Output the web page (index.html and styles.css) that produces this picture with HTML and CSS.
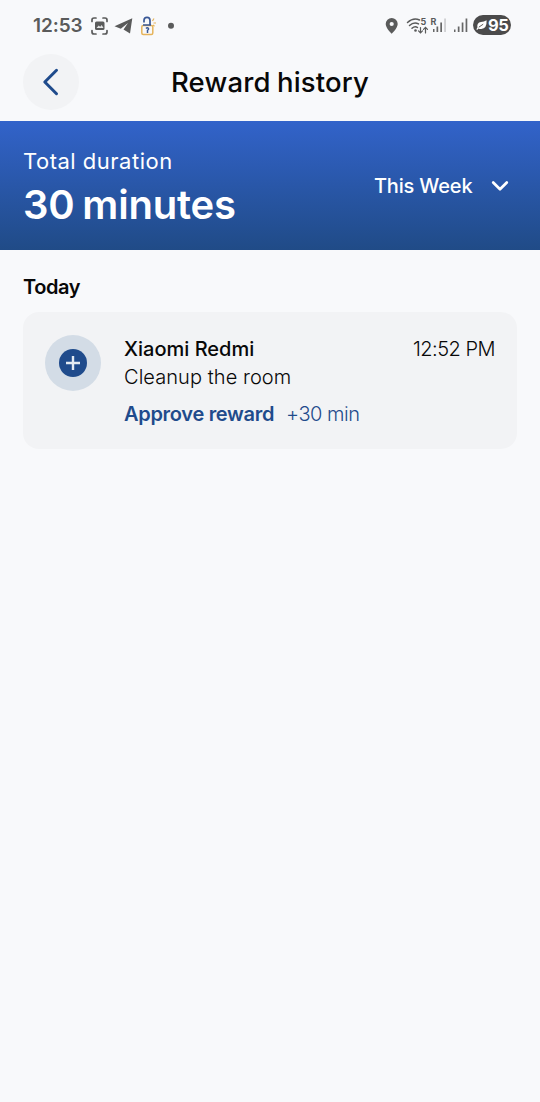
FILE: index.html
```html
<!DOCTYPE html>
<html lang="en">
<head>
<meta charset="utf-8">
<title>Reward history</title>
<link rel="stylesheet" href="styles.css">
</head>
<body>
<div class="status">
  <span class="clock">12:53</span>
  <svg class="left-icons" width="90" height="24" viewBox="90 14 90 24" fill="none">
    <g stroke="#5a5b5b" stroke-width="1.700" stroke-linecap="round" stroke-linejoin="round">
      <path d="M92 21.500v-1.500q0-2 2-2H96M103 18h2q2 0 2 2v1.500M107 30.500v1.500q0 2-2 2H103M96 34h-2q-2 0-2-2v-1.500"/>
    </g>
    <rect x="95" y="21.500" width="9.500" height="8.500" rx="1.500" fill="#5a5b5b"/>
    <path d="M96.500 28l2.200-2.500 1.500 1.300 1.500-1.800 1.800 3z" fill="#e4e5e6"/>
    <path d="M114.500 26.300 132.300 18.300 130 33.600 123.500 29.500 128 23 120.800 28.700z" fill="#5a5b5b"/>
    <rect x="141.800" y="25.500" width="11" height="9" rx="1.500" stroke="#e5b45c" stroke-width="1.500"/>
    <path d="M143 25h8M144 22.500v-2q0-3.200 3-3.200t3 3.200v4" stroke="#395896" stroke-width="1.700"/>
    <path d="M146 28.500q1.300-1.500 2.500 0 .4 1-1 1.800V33" stroke="#395896" stroke-width="1.500"/>
    <path d="M152.500 21l1.500-2.500M153.500 23h2.500M153 25l1.500 1.200" stroke="#e5b45c" stroke-width="1.200"/>
    <circle cx="171" cy="25.800" r="3" fill="#5a5b5b"/>
  </svg>
  <svg class="right-icons" width="88" height="24" viewBox="384 14 88 24" fill="none">
    <path fill-rule="evenodd" d="M391.700 18a6 6 0 0 0-6 6c0 4.200 6 9.700 6 9.700s6-5.500 6-9.700a6 6 0 0 0-6-6zm0 3.900a2.100 2.100 0 1 1 0 4.200 2.100 2.100 0 0 1 0-4.200z" fill="#5a5b5b"/>
    <g stroke="#5a5b5b" stroke-width="1.500" stroke-linecap="round">
      <path d="M407.500 22.500q6-5.500 12-2.500M409.500 25.500q4.500-4.200 9-1.600M412 28.300q3-2.800 5.500-.8"/>
      <path d="M420.500 27.500v5M418.500 30.800l2 2 2-2M425.500 33v-5M423.500 29.300l2-2 2 2" stroke-width="1.200"/>
    </g>
    <circle cx="415.500" cy="30.500" r="1.300" fill="#5a5b5b"/>
    <text x="420.500" y="25" class="tiny">5</text>
    <text x="430.500" y="25" class="tiny">R</text>
    <g fill="#666767">
      <path d="M433 29h1.500v3H433zM436.500 26.500h1.700v5.500h-1.700zM440.300 22.500h1.700v9.500h-1.700z"/>
      <path d="M444.300 18.500h1.500V32h-1.500z" fill="#c6c7c9"/>
      <path d="M454 29.500h1.500V32H454zM457.800 26.500h1.700V32h-1.700zM461.700 22.500h1.700V32h-1.700zM465.600 18.500h1.700V32h-1.700z"/>
    </g>
  </svg>
  <span class="battery">
    <svg width="11" height="10" viewBox="0 0 11 10"><path d="M.3 9.500 1.400 7.500Q.6 2.700 5 2 8 1.700 10.600.3 11 8.800 5.200 9 3.400 9.100 2.500 8.400L1.500 9.800z" fill="#fff"/><path d="M2.800 7.200 7.200 4.200" stroke="#4b4b4b" stroke-width=".9"/></svg><span>95</span>
  </span>
</div>
<header class="header">
  <button class="back" aria-label="Back"><svg width="56" height="56" viewBox="0 0 56 56"><path d="M33.500 16.300 21.800 28 33.500 39.700" fill="none" stroke="#1f4b8c" stroke-width="3" stroke-linecap="round" stroke-linejoin="round"/></svg></button>
  <h1 class="title">Reward history</h1>
</header>
<section class="summary">
  <div>
    <div class="label">Total duration</div>
    <div class="total">30 minutes</div>
  </div>
  <div class="period"><span>This Week</span><svg width="18" height="12" viewBox="0 0 18 12"><path d="M2.200 2.500 9 9.300 15.800 2.500" fill="none" stroke="#fff" stroke-width="2.700" stroke-linecap="round" stroke-linejoin="round"/></svg></div>
</section>
<main class="content">
  <h2 class="day">Today</h2>
  <article class="card">
    <div class="badge"><svg width="28" height="28" viewBox="0 0 28 28"><circle cx="14" cy="14" r="14" fill="#1f4b8c"/><path d="M14 7v14M7 14h14" stroke="#e3eaf2" stroke-width="2.400"/></svg></div>
    <div class="details">
      <div class="row"><span class="device">Xiaomi Redmi</span><span class="time">12:52 PM</span></div>
      <div class="task">Cleanup the room</div>
      <div class="reward"><span class="approve">Approve reward</span><span class="amount">+30 min</span></div>
    </div>
  </article>
</main>
</body>
</html>
```
FILE: styles.css
```css
* { box-sizing: border-box; }
body { margin: 0; height: 1102px; background: #f8f9fb; color: #080808; font-family: Inter, "Liberation Sans", sans-serif; }
h1, h2 { margin: 0; }
svg { display: block; flex: none; }
span, .label, .total, .task, .title, .day { white-space: nowrap; }
.status { height: 53px; padding: 14px 29px 0 33px; display: flex; align-items: flex-start; color: #5a5b5b; }
.clock { width: 57px; font: 600 19px/24px Inter, sans-serif; letter-spacing: -0.1px; }
.right-icons { margin-left: auto; }
.tiny { font: 700 9px Inter, sans-serif; fill: #5a5b5b; }
.battery { width: 38px; height: 20px; margin: 1px 0 0 1px; border-radius: 10px; background: #4b4b4b; color: #fff; display: flex; align-items: center; padding-left: 3px; gap: 1px; font: 700 16.500px/20px Inter, sans-serif; letter-spacing: -0.5px; }
.header { height: 68px; padding: 1px 23px 0; display: grid; grid-template-columns: 56px 1fr 56px; align-items: start; }
.back { width: 56px; height: 56px; padding: 0; border: 0; border-radius: 50%; background: #f2f3f5; }
.title { text-align: center; font-size: 27.500px; line-height: 56px; font-weight: 500; letter-spacing: 0.15px; word-spacing: -1px; }
.summary { height: 129px; padding: 25px 31px 0 23px; display: flex; justify-content: space-between; background: linear-gradient(#3263ca, #204b87); color: #fff; }
.label { font-size: 22px; line-height: 30px; letter-spacing: 0.5px; }
.total { font-size: 40px; line-height: 58px; font-weight: 600; letter-spacing: -0.2px; word-spacing: -2px; }
.period { height: 30px; margin-top: 25px; display: flex; align-items: center; gap: 18.500px; font-size: 20px; font-weight: 500; letter-spacing: -0.15px; }
.content { padding: 22px 23px 0; }
.day { height: 40px; font-size: 20px; line-height: 30px; font-weight: 600; letter-spacing: -0.4px; }
.card { height: 137px; padding: 22.500px 22px 0; border-radius: 16px; background: #f2f3f5; display: flex; gap: 23px; }
.badge { width: 56px; height: 56px; flex: none; border-radius: 50%; background: #d3dce6; display: grid; place-items: center; }
.details { flex: 1; font-size: 20px; line-height: 28px; padding-top: 0.500px; }
.row { display: flex; justify-content: space-between; }
.device { font-weight: 500; }
.time, .task, .amount { font-weight: 300; }
.time { letter-spacing: -0.5px; }
.task { letter-spacing: 0.07px; }
.reward { margin-top: 9px; display: flex; gap: 12px; color: #1f4b8c; }
.approve { font-weight: 600; letter-spacing: -0.3px; }
.amount { letter-spacing: -0.5px; }
```
